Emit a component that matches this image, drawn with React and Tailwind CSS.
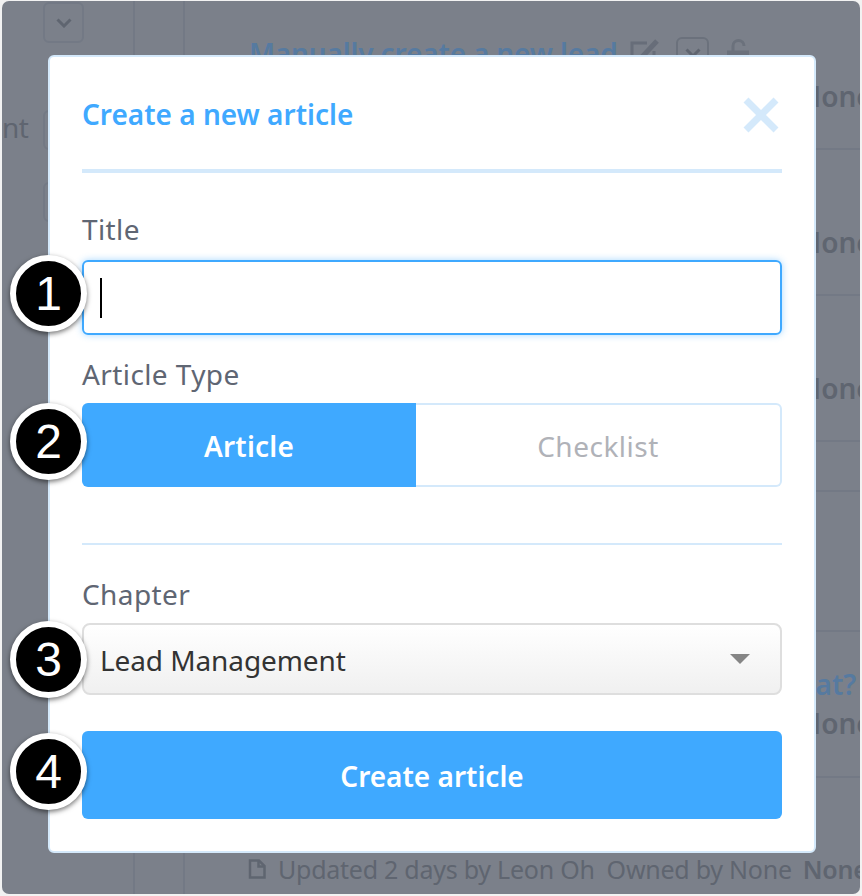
import React from "react";

function Badge({ n, top }) {
  return (
    <div
      className={`absolute left-[-72px] ${top} w-[77px] h-[77px] rounded-full bg-black border-[6px] border-white shadow-[0_2px_5px_rgba(0,0,0,0.55)] flex items-center justify-center text-white text-[48px] leading-none font-['Liberation_Sans',sans-serif] z-10`}
    >
      {n}
    </div>
  );
}

function BgRow({ h, children }) {
  return <div className={`${h} border-b-2 border-[#737985] shrink-0 overflow-hidden whitespace-nowrap`}>{children}</div>;
}

function RowNone({ pt }) {
  return <div className={`${pt} pl-[614px] leading-[36px] font-semibold text-[#5f6570]`}>None</div>;
}

export default function App() {
  return (
    <div className="w-[862px] h-[896px] bg-[#f2f2f2] pl-[2px] pr-[2px] pt-[1px] pb-[2px] font-['Noto_Sans',sans-serif]">
      <div className="relative w-full h-full rounded-[7px] bg-[#7b808a] overflow-hidden text-[28px]">
        <div className="flex h-full text-[#5f6570]">
          <div className="w-[131px] shrink-0 overflow-hidden">
            <div className="ml-[41px] mt-[1px] w-[41px] h-[41px] rounded-[6px] border-2 border-[#737985] flex items-center justify-center">
              <svg width="16" height="10" viewBox="0 0 16 10" fill="none" stroke="#5f6570" strokeWidth="3">
                <path d="M1.5 1.5 L8 8 L14.5 1.5" />
              </svg>
            </div>
            <div className="flex items-center mt-[67px] h-[40px]">
              <span className="w-[41px] mb-[6px] text-[#5f6570] tracking-[-0.5px]">nt</span>
              <div className="w-[41px] h-[40px] rounded-[6px] border-2 border-[#737985]" />
            </div>
            <div className="ml-[41px] mt-[32px] w-[41px] h-[40px] rounded-[6px] border-2 border-[#737985]" />
          </div>
          <div className="w-[50px] shrink-0 border-l-2 border-[#737985]" />
          <div className="flex-1 min-w-0 border-l-2 border-[#737985] flex flex-col overflow-hidden">
            <BgRow h="h-[149px]">
              <div className="flex items-center gap-[13px] pl-[64px] pt-[34px] h-[70px] text-[#567aa0] font-semibold">
                <span className="w-[368px] leading-[36px] tracking-[-0.15px]">Manually create a new lead</span>
                <svg width="30" height="30" viewBox="0 0 30 30" fill="none" stroke="#676d79" strokeWidth="3">
                  <path d="M24 13 V27 H2 V5 H17" />
                  <path d="M11 20 L27 3" strokeWidth="5" />
                </svg>
                <div className="ml-[3px] w-[33px] h-[32px] rounded-[6px] border-2 border-[#6b717c] flex items-center justify-center">
                  <svg width="16" height="10" viewBox="0 0 16 10" fill="none" stroke="#5f6570" strokeWidth="3">
                    <path d="M1.5 1.5 L8 8 L14.5 1.5" />
                  </svg>
                </div>
                <svg className="ml-[5px]" width="22" height="30" viewBox="0 0 22 30" fill="none" stroke="#6b717c" strokeWidth="3">
                  <path d="M6 14 V8 a5.5 5.5 0 0 1 11 0" />
                  <rect x="1" y="14" width="20" height="14" fill="#6b717c" />
                </svg>
              </div>
              <RowNone pt="pt-[7px]" />
            </BgRow>
            <BgRow h="h-[146px]">
              <RowNone pt="pt-[74px]" />
            </BgRow>
            <BgRow h="h-[146px]">
              <RowNone pt="pt-[74px]" />
            </BgRow>
            <BgRow h="h-[50px]" />
            <BgRow h="h-[140px]" />
            <BgRow h="h-[146px]">
              <div className="pl-[586px] pt-[34px] leading-[36px] font-semibold text-[#567aa0]">What?</div>
              <div className="pl-[614px] leading-[36px] pt-[3px] font-semibold text-[#5f6570]">None</div>
            </BgRow>
            <div className="flex items-center pl-[63px] pt-[73px] whitespace-nowrap text-[25px] tracking-[-0.25px] leading-[36px]">
              <svg className="shrink-0 mr-[12px]" width="18" height="20" viewBox="0 0 18 20" fill="none" stroke="#5f6570" strokeWidth="2.5">
                <path d="M2 1.5 H11 L16.5 7 V18.5 H2 Z" />
                <path d="M10.5 2 V7.5 H16" />
              </svg>
              <span>Updated 2 days by Leon Oh</span>
              <span className="ml-[12px]">Owned by None</span>
              <span className="ml-[11px] font-semibold">None</span>
            </div>
          </div>
        </div>

        <div className="absolute left-[46px] top-[54px] w-[768px] h-[798px] rounded-[6px] bg-white border-2 border-[#d4e9fb] px-[32px] pt-[32px] text-[#5f6673]">
          <div className="flex items-center justify-between h-[52px] pr-[3px]">
            <h2 className="text-[#3fa9ff] font-semibold leading-none mb-[2px]">Create a new article</h2>
            <svg width="36" height="36" viewBox="0 0 36 36" stroke="#d4e9fb" strokeWidth="7" fill="none">
              <path d="M3 3 L33 33 M33 3 L3 33" />
            </svg>
          </div>
          <div className="mt-[28px] h-[4px] bg-[#d4e9fb]" />

          <div className="mt-[39px] h-[36px] leading-[34px] tracking-[0.4px]">Title</div>
          <div className="relative mt-[12px]">
            <Badge n="1" top="top-[-5px]" />
            <div className="h-[75px] rounded-[6px] border-2 border-[#3fa9ff] shadow-[0_0_7px_rgba(63,169,255,0.45)] flex items-center pl-[16px]">
              <div className="w-[2px] h-[40px] bg-black" />
            </div>
          </div>

          <div className="mt-[22px] h-[36px] leading-[34px] tracking-[0.4px]">Article Type</div>
          <div className="relative mt-[10px]">
            <Badge n="2" top="top-0" />
            <div className="flex h-[84px]">
              <div className="w-[334px] pt-[2px] rounded-l-[6px] bg-[#3fa9ff] text-white font-semibold flex items-center justify-center tracking-[0.2px]">Article</div>
              <div className="flex-1 pt-[2px] rounded-r-[6px] border-2 border-l-0 border-[#d4e9fb] text-[#b0b2b8] flex items-center justify-center tracking-[0.5px]">Checklist</div>
            </div>
          </div>

          <div className="mt-[56px] h-[2px] bg-[#d4e9fb]" />

          <div className="mt-[32px] h-[36px] leading-[34px] tracking-[0.4px]">Chapter</div>
          <div className="relative mt-[10px]">
            <Badge n="3" top="top-[-2px]" />
            <div className="h-[72px] rounded-[8px] border-2 border-[#dedede] bg-linear-to-b from-white to-[#f0f0f0] flex items-center justify-between pl-[16px] pr-[30px] text-[#333333]">
              <span className="pt-[2px] tracking-[-0.1px]">Lead Management</span>
              <svg width="20" height="10" viewBox="0 0 20 10" fill="#858585">
                <path d="M0 0 H20 L10 10 Z" />
              </svg>
            </div>
          </div>

          <div className="relative mt-[36px]">
            <Badge n="4" top="top-[2px]" />
            <div className="h-[88px] pt-[2px] rounded-[6px] bg-[#3fa9ff] text-white font-semibold flex items-center justify-center">Create article</div>
          </div>
        </div>
      </div>
    </div>
  );
}
